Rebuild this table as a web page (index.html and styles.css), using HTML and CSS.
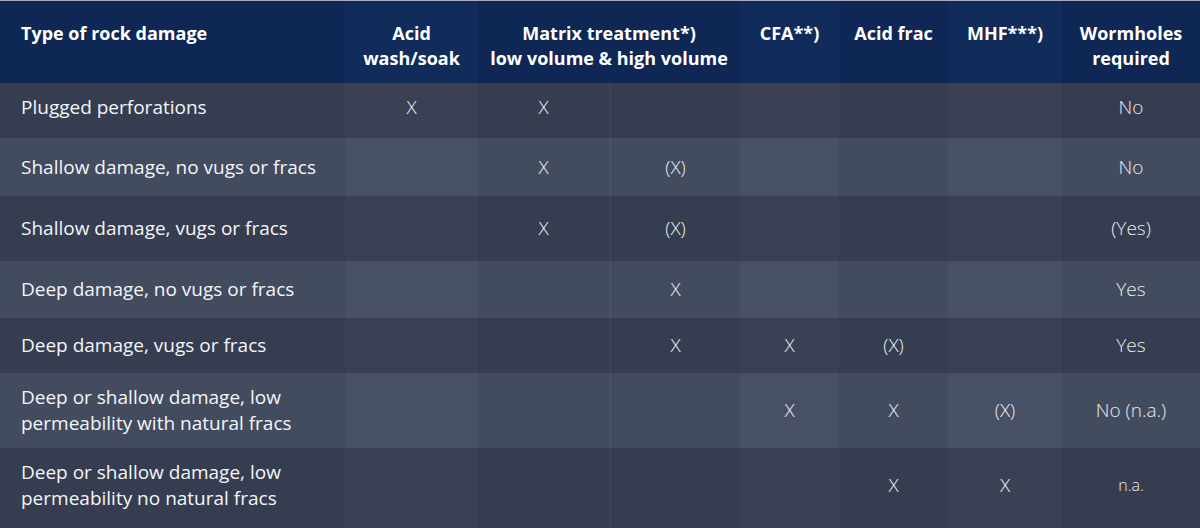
FILE: index.html
```html
<!DOCTYPE html>
<html lang="en">
<head>
<meta charset="utf-8">
<title>Rock damage treatment table</title>
<link rel="stylesheet" href="styles.css">
</head>
<body>
<table class="grid">
  <colgroup>
    <col class="c0"><col class="c1"><col class="c2"><col class="c3"><col class="c4"><col class="c5"><col class="c6"><col class="c7">
  </colgroup>
  <thead>
    <tr class="head">
      <th class="first">Type of rock damage</th>
      <th class="lt">Acid<br>wash/soak</th>
      <th colspan="2">Matrix treatment*)<br>low volume &amp; high volume</th>
      <th class="lt">CFA**)</th>
      <th>Acid frac</th>
      <th class="lt">MHF***)</th>
      <th>Wormholes<br>required</th>
    </tr>
  </thead>
  <tbody>
    <tr class="dk h1">
      <td class="first">Plugged perforations</td>
      <td class="lt">X</td><td>X</td><td class="split"></td><td class="lt"></td><td></td><td class="lt"></td><td>No</td>
    </tr>
    <tr class="li h2">
      <td class="first">Shallow damage, no vugs or fracs</td>
      <td class="lt"></td><td>X</td><td class="split">(X)</td><td class="lt"></td><td></td><td class="lt"></td><td>No</td>
    </tr>
    <tr class="dk h3">
      <td class="first">Shallow damage, vugs or fracs</td>
      <td class="lt"></td><td>X</td><td class="split">(X)</td><td class="lt"></td><td></td><td class="lt"></td><td>(Yes)</td>
    </tr>
    <tr class="li h4">
      <td class="first">Deep damage, no vugs or fracs</td>
      <td class="lt"></td><td></td><td class="split">X</td><td class="lt"></td><td></td><td class="lt"></td><td>Yes</td>
    </tr>
    <tr class="dk h5">
      <td class="first">Deep damage, vugs or fracs</td>
      <td class="lt"></td><td></td><td class="split">X</td><td class="lt">X</td><td>(X)</td><td class="lt"></td><td>Yes</td>
    </tr>
    <tr class="li h6">
      <td class="first">Deep or shallow damage, low<br>permeability with natural fracs</td>
      <td class="lt"></td><td></td><td class="split"></td><td class="lt">X</td><td>X</td><td class="lt">(X)</td><td>No (n.a.)</td>
    </tr>
    <tr class="dk h7">
      <td class="first">Deep or shallow damage, low<br>permeability no natural fracs</td>
      <td class="lt"></td><td></td><td class="split"></td><td class="lt"></td><td>X</td><td class="lt">X</td><td class="small">n.a.</td>
    </tr>
  </tbody>
</table>
</body>
</html>
```

FILE: styles.css
```css
html, body {
  margin: 0;
  padding: 0;
  background: #363d50;
}

body {
  font-family: "Open Sans", "Noto Sans", "Liberation Sans", sans-serif;
  color: #f2f4f7;
}

.grid {
  width: 1200px;
  border-collapse: collapse;
  table-layout: fixed;
  border-top: 1px solid #a4abb9;
}

.c0 { width: 345px; }
.c1 { width: 133px; }
.c2 { width: 132px; }
.c3 { width: 130px; }
.c4 { width: 99px; }
.c5 { width: 109px; }
.c6 { width: 114px; }
.c7 { width: 138px; }

th, td {
  padding: 0;
  text-align: center;
}

.head {
  height: 82px;
}

.head th {
  background: #0f2754;
  color: #ffffff;
  font-weight: 700;
  font-size: 18px;
  line-height: 25px;
  vertical-align: top;
  padding-top: 20px;
}

.head th.lt {
  background: #112b5b;
}

th.first, td.first {
  text-align: left;
  padding-left: 21px;
}

td {
  font-size: 19px;
  font-weight: 300;
  line-height: 26px;
  vertical-align: middle;
  color: #e9ebef;
}

td.first {
  font-weight: 400;
  color: #f4f5f8;
}

td.small {
  font-size: 16px;
}

.dk td { background: #363d50; }
.dk td.lt { background: #3a4155; }
.li td { background: #434b5f; }
.li td.lt { background: #485066; }

td.split {
  border-left: 2px solid rgba(255, 255, 255, 0.035);
}

.h1 { height: 55px; }
.h1 td { padding-bottom: 7px; }
.h2 { height: 58px; }
.h3 { height: 65px; }
.h4 { height: 57px; }
.h5 { height: 55px; }
.h6 { height: 75px; }
.h7 { height: 80px; }
.h7 td { padding-bottom: 5px; }
```
